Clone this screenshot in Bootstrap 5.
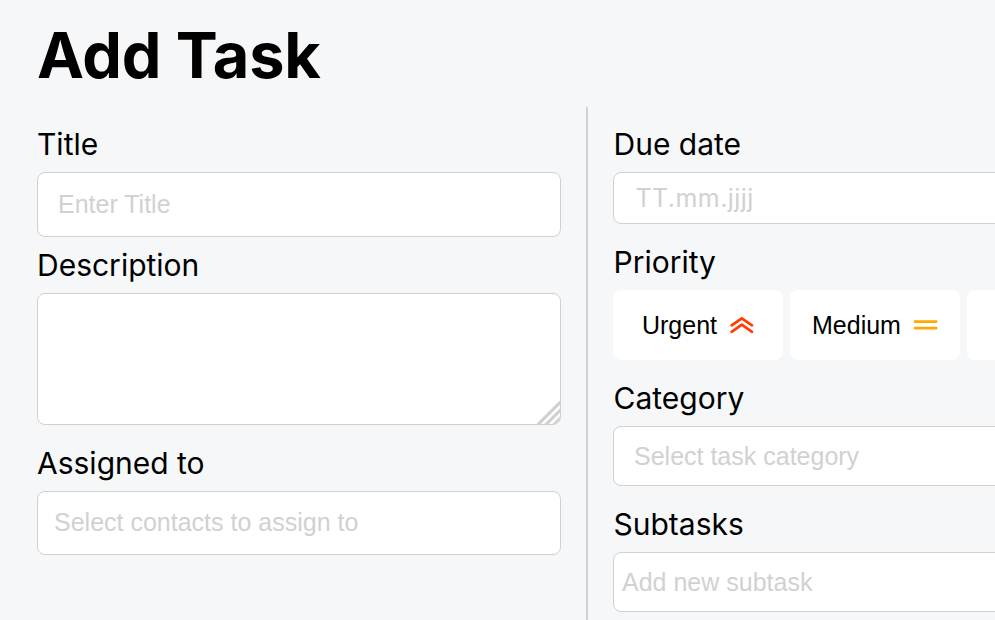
<!DOCTYPE html>
<html lang="en">
<head>
<meta charset="utf-8">
<meta name="viewport" content="width=device-width, initial-scale=1">
<title>Add Task</title>
<link href="https://cdn.jsdelivr.net/npm/bootstrap@5.3.0/dist/css/bootstrap.min.css" rel="stylesheet">
<style>
  body { background: #f6f7f8; color: #000; font-family: Inter, sans-serif; }
  .page { padding: 19px 0 0 37px; height: 100vh; }
  .page-title { font-size: 63px; line-height: 73px; font-weight: 700; height: 86px; letter-spacing: -.3px; }
  .task-side { width: 524px; padding-top: 21px; }
  .space-sm { margin-bottom: 10px; }
  .space-md { margin-bottom: 20px; }
  .divider { width: 2px; height: 640px; margin: 0 25px; background: linear-gradient(#f6f7f8, #d1d1d1 4px); }
  .task-label { display: block; font-size: 30px; line-height: 36px; margin-bottom: 10px; white-space: nowrap; }
  .right-side .task-label { padding-left: .5px; }
  .task-input { border: 1px solid #d1d1d1; border-radius: 8px; background: #fff; font: 25px/30px "Liberation Sans", Arial, sans-serif; padding-top: 0; padding-bottom: 0; color: #000; }
  .task-input::placeholder { color: #d1d1d1; opacity: 1; }
  .f-title { height: 65px; padding-left: 20px; }
  .f-desc { height: 132px; resize: none; }
  .f-assign { height: 64px; padding: 0 0 2px 16px; }
  .f-date { height: 52px; padding-left: 21.5px; font-family: Inter, sans-serif; letter-spacing: .45px; }
  .f-category { height: 60px; padding-left: 20px; }
  .f-subtask { height: 60px; padding-left: 8px; }
  .grip { right: 1px; bottom: 1px; }
  .prio-row { gap: 7px; }
  .prio { width: 170px; height: 70px; border: 0; border-radius: 8px; background: #fff; color: #000; padding: 0; gap: 12px; font: 25px/30px "Liberation Sans", Arial, sans-serif; }
</style>
<script src="https://cdn.jsdelivr.net/npm/bootstrap@5.3.0/dist/js/bootstrap.bundle.min.js"></script>
</head>
<body>
<main class="page overflow-hidden">
  <h1 class="page-title mb-0">Add Task</h1>
  <form class="d-flex">
    <div class="task-side flex-shrink-0">
      <div class="space-sm">
        <label class="task-label" for="title">Title</label>
        <input id="title" class="form-control task-input f-title" placeholder="Enter Title">
      </div>
      <div class="space-md">
        <label class="task-label" for="desc">Description</label>
        <div class="position-relative">
          <textarea id="desc" class="form-control task-input f-desc d-block"></textarea>
          <svg class="grip position-absolute" width="23" height="23" viewBox="0 0 23 23">
            <defs><clipPath id="corner"><path d="M0 0H23V16A7 7 0 0 1 16 23H0Z"/></clipPath></defs>
            <path clip-path="url(#corner)" d="M0 24.5 24.5 0M8 24.5 24.5 8M16 24.5 24.5 16" stroke="#d1d1d1" stroke-width="3.2" fill="none"/>
          </svg>
        </div>
      </div>
      <div>
        <label class="task-label" for="assign">Assigned to</label>
        <input id="assign" class="form-control task-input f-assign" placeholder="Select contacts to assign to">
      </div>
    </div>
    <div class="divider flex-shrink-0"></div>
    <div class="task-side right-side flex-shrink-0">
      <div class="space-md">
        <label class="task-label" for="due">Due date</label>
        <input id="due" class="form-control task-input f-date" placeholder="TT.mm.jjjj">
      </div>
      <div class="space-md">
        <span class="task-label">Priority</span>
        <div class="d-flex prio-row">
          <button type="button" class="btn prio d-flex align-items-center justify-content-center">Urgent
            <svg width="25" height="18" viewBox="0 0 25 18" fill="none" stroke="#ff3d00" stroke-width="2.8" stroke-linecap="round" stroke-linejoin="round"><path d="M2.6 9.3 12.8 2.3 23 9.3M2.6 15.8 12.8 8.7 23 15.8"/></svg>
          </button>
          <button type="button" class="btn prio d-flex align-items-center justify-content-center">Medium
            <svg width="25" height="12" viewBox="0 0 25 12" fill="none" stroke="#ffa800" stroke-width="2.7" stroke-linecap="round"><path d="M2 2.6H23.2M2 9.2H23.2"/></svg>
          </button>
          <button type="button" class="btn prio"></button>
        </div>
      </div>
      <div class="space-md">
        <label class="task-label" for="category">Category</label>
        <input id="category" class="form-control task-input f-category" placeholder="Select task category">
      </div>
      <div>
        <label class="task-label" for="subtask">Subtasks</label>
        <input id="subtask" class="form-control task-input f-subtask" placeholder="Add new subtask">
      </div>
    </div>
  </form>
</main>
</body>
</html>
